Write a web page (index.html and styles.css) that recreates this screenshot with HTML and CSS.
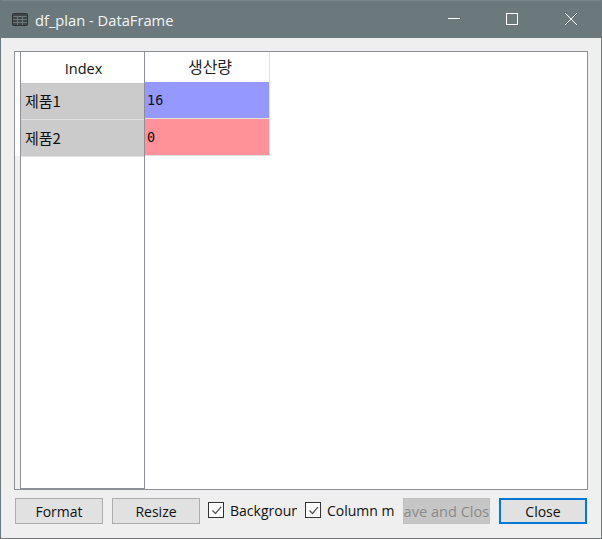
FILE: index.html
```html
<!DOCTYPE html>
<html lang="ko">
<head>
<meta charset="utf-8">
<title>df_plan - DataFrame</title>
<link rel="stylesheet" href="styles.css">
</head>
<body>
<div class="window">
  <header class="titlebar">
    <svg class="app-icon" width="16" height="13" viewBox="0 0 16 13">
      <rect x="0.5" y="0.5" width="15" height="12" rx="1" fill="#3f4648" stroke="#2f3436"/>
      <path d="M1 3.5H15M1 6.5H15M1 9.5H15M5.5 3V12M10.5 3V12" stroke="#6b787b" stroke-width="1" fill="none"/>
    </svg>
    <span class="title">df_plan - DataFrame</span>
    <div class="controls">
      <svg width="14" height="14" viewBox="0 0 14 14"><path d="M1 6.5H13" stroke="#fff" fill="none"/></svg>
      <svg width="14" height="14" viewBox="0 0 14 14"><rect x="1.5" y="1.5" width="11" height="11" stroke="#fff" fill="none"/></svg>
      <svg class="close-icon" width="14" height="14" viewBox="0 0 14 14"><path d="M1 1L13 13M13 1L1 13" stroke="#fff" fill="none"/></svg>
    </div>
  </header>
  <main class="content">
    <section class="frame">
      <div class="gutter"></div>
      <div class="index-col">
        <div class="head">Index</div>
        <div class="row-label first">제품1</div>
        <div class="row-label">제품2</div>
      </div>
      <div class="data-col">
        <div class="head data-head">생산량</div>
        <div class="cell blue">16</div>
        <div class="cell red">0</div>
      </div>
    </section>
    <footer class="actions">
      <button class="btn format">Format</button>
      <button class="btn resize">Resize</button>
      <label class="check bg-check"><span class="box"><svg width="13" height="13" viewBox="0 0 13 13"><path d="M2.5 6.5L5.5 9.5L11 3" stroke="#555" stroke-width="1.2" fill="none"/></svg></span><span class="clip clip-bg">Background color</span></label>
      <label class="check col-check"><span class="box"><svg width="13" height="13" viewBox="0 0 13 13"><path d="M2.5 6.5L5.5 9.5L11 3" stroke="#555" stroke-width="1.2" fill="none"/></svg></span><span class="clip clip-col">Column min/max</span></label>
      <button class="btn save" disabled><span>Save and Close</span></button>
      <button class="btn close">Close</button>
    </footer>
  </main>
</div>
</body>
</html>
```
FILE: styles.css
```css
* { box-sizing: border-box; }
html, body { margin: 0; padding: 0; }
body { width: 602px; height: 539px; overflow: hidden; font-family: "Open Sans", "Noto Sans CJK KR", sans-serif; }
.window { width: 602px; height: 539px; border: 1px solid #6b797d; border-top: 0; background: #efefef; display: flex; flex-direction: column; }
.titlebar { height: 38px; flex: none; background: #6b797d; display: flex; align-items: flex-start; padding-left: 11px; color: #fff; border-top: 1px solid #7a878a; }
.app-icon { flex: none; margin-top: 12px; }
.title { margin-left: 7px; margin-top: 8px; font-size: 14.7px; line-height: 22px; color: #f2f6f8; font-family: "Open Sans", sans-serif; }
.controls { margin-left: auto; margin-top: 11px; display: flex; gap: 44px; padding-right: 23px; }
.controls svg { display: block; }
.close-icon { margin-left: 1px; }
.content { flex: 1; padding: 13px 13px 0; display: flex; flex-direction: column; }
.frame { height: 439px; flex: none; border: 1px solid #8c9094; background: #fff; display: flex; }
.gutter { width: 5px; background: linear-gradient(#fff 0 104px, #efefef 104px); flex: none; }
.index-col { width: 125px; flex: none; border: 1px solid #8d9196; border-top: 0; height: 437px; }
.head { height: 31px; display: flex; align-items: center; justify-content: center; font-size: 14.5px; color: #111; font-family: "Open Sans", "Noto Sans CJK KR", sans-serif; padding: 1px 0 0 2px; }
.data-col { width: 125px; flex: none; }
.data-head { height: 30px; border-right: 1px solid #e2e2e2; padding: 0 0 3px 6px; font-size: 16px; font-weight: 400; color: #222; font-family: "Noto Sans CJK KR", sans-serif; }
.row-label { height: 37px; background: #cbcbcb; border-bottom: 1px solid #e0e0e0; display: flex; align-items: center; padding-left: 4px; padding-bottom: 1px; font-size: 15px; color: #111; font-family: "Noto Sans CJK KR", sans-serif; }
.cell { height: 37px; display: flex; align-items: center; padding-left: 2px; border-right: 1px solid #e2e2e2; border-bottom: 1px solid #e2e2e2; font-family: "DejaVu Sans Mono", monospace; font-size: 13.5px; color: #111; }
.blue { background: #9598ff; }
.red { background: #ff9299; }
.actions { display: flex; align-items: center; height: 26px; margin-top: 8px; padding-left: 1px; }
.btn { height: 26px; border: 1px solid #adadad; background: #e1e1e1; font-family: "Open Sans", sans-serif; font-size: 14px; color: #111; padding: 0; flex: none; }
.format { width: 88px; }
.resize { width: 88px; margin-left: 9px; }
.check { display: flex; align-items: center; font-size: 14px; color: #111; flex: none; margin-top: -2px; }
.bg-check { margin-left: 8px; }
.col-check { margin-left: 8px; }
.box { width: 16px; height: 16px; border: 1px solid #333; background: #fff; display: flex; align-items: center; justify-content: center; flex: none; }
.clip { display: block; overflow: hidden; white-space: nowrap; margin-left: 6px; }
.clip-bg { width: 67px; }
.clip-col { width: 68px; }
.save { width: 87px; margin-left: 8px; background: #c6c6c6; border-color: #bfbfbf; color: #8a8a8a; overflow: hidden; display: flex; align-items: center; justify-content: center; white-space: nowrap; font-size: 14.6px; }
.save span { flex: none; }
.close { width: 88px; margin-left: 9px; border: 2px solid #0078d7; }
```
